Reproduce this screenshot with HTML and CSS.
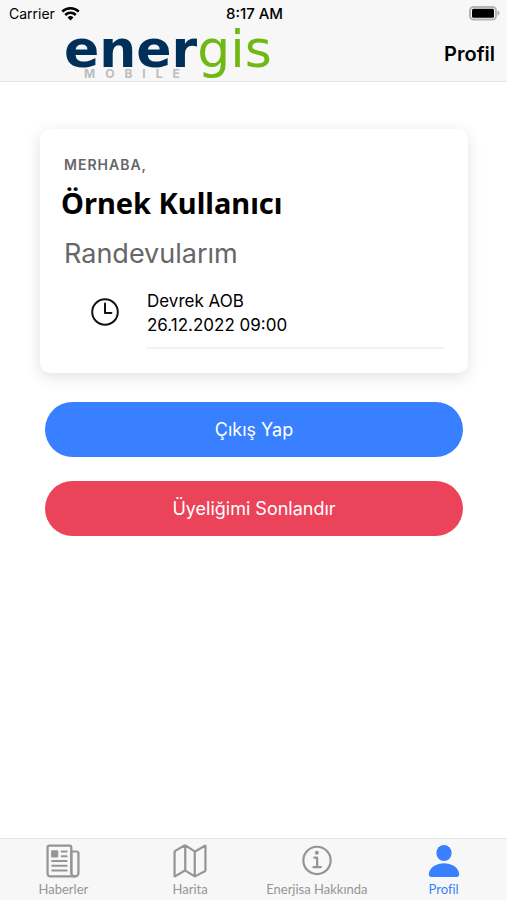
FILE: index.html
```html
<!DOCTYPE html>
<html lang="tr">
  <head>
    <meta charset="UTF-8" />
    <meta name="viewport" content="width=device-width, initial-scale=1.0" />
    <title>Energis Mobile - Profil</title>
    <link rel="stylesheet" href="styles.css">
  </head>
  <body>
    <header class="header">
      <div class="status">
        <div class="carrier">
          <span>Carrier</span>
          <svg class="wifi" viewBox="0 0 18 14" aria-hidden="true">
            <path d="M1.2 5.2a11.2 11.2 0 0 1 15.6 0M4 8.4a7.2 7.2 0 0 1 10 0" fill="none" stroke="#000" stroke-width="2.4" />
            <path d="M9 13.6 6.2 10.8a4 4 0 0 1 5.6 0z" />
          </svg>
        </div>
        <time class="clock">8:17 AM</time>
        <svg class="battery" viewBox="0 0 31 15" aria-hidden="true">
          <rect x="1" y="1" width="26" height="12.6" rx="3.6" fill="#f7f7f7" stroke="#b4b4b4" stroke-width="2" />
          <rect x="3" y="2.8" width="22" height="9" rx="1.5" />
          <path d="M28.6 4.6c2.4.8 2.4 4.4 0 5.2z" fill="#a8a8a8" />
        </svg>
      </div>
      <div class="toolbar">
        <div class="logo">
          <div class="logo-name"><b>ener</b><span>gis</span></div>
          <div class="logo-sub">MOBILE</div>
        </div>
        <h1>Profil</h1>
      </div>
    </header>

    <main>
      <section class="card">
        <p class="greeting">Merhaba,</p>
        <h2>Örnek Kullanıcı</h2>
        <h3>Randevularım</h3>
        <div class="appointment">
          <svg class="clock-icon" viewBox="0 0 28 28" aria-hidden="true">
            <circle cx="14" cy="14" r="12.8" />
            <path d="M14 5.6V15h6.4" />
          </svg>
          <div class="details">
            <p>Devrek AOB</p>
            <p>26.12.2022 09:00</p>
          </div>
        </div>
      </section>
      <div class="actions">
        <button class="logout" type="button">Çıkış Yap</button>
        <button class="delete" type="button">Üyeliğimi Sonlandır</button>
      </div>
    </main>

    <nav class="tabs">
      <a href="#haberler">
        <svg viewBox="0 0 512 512" aria-hidden="true">
          <path d="M368 415.9V72a24 24 0 0 0-24-24H72a24 24 0 0 0-24 24v352a40.1 40.1 0 0 0 40 40h328" />
          <path d="M416 464a48 48 0 0 1-48-48V128h72a24 24 0 0 1 24 24v264a48 48 0 0 1-48 48z" />
          <path d="M240 128h64M240 192h64M112 256h192M112 320h192M112 384h192" />
          <path class="solid" d="M176 208h-64a16 16 0 0 1-16-16v-64a16 16 0 0 1 16-16h64a16 16 0 0 1 16 16v64a16 16 0 0 1-16 16z" />
        </svg>
        <span>Haberler</span>
      </a>
      <a href="#harita">
        <svg viewBox="0 0 512 512" aria-hidden="true">
          <path d="M313.3 459.5 198.7 388.5a15.9 15.9 0 0 0-16.9-.1L54.3 462.8c-2.8 1.6-6.3-.4-6.3-3.6V133.1a16.1 16.1 0 0 1 8-13.9l125.8-70.8a15.9 15.9 0 0 1 17.1.2l114.2 74.9a16 16 0 0 0 17.2.2l127.4-74.3c2.8-1.7 6.3.4 6.3 3.6v326.4a16 16 0 0 1-8.1 13.9l-125.6 66.4a16 16 0 0 1-17-.2zM192 48v336M320 128v336" />
        </svg>
        <span>Harita</span>
      </a>
      <a href="#hakkinda">
        <svg viewBox="0 0 512 512" aria-hidden="true">
          <circle cx="256" cy="248" r="184" />
          <path d="M220 212h38v122M208 338h100" />
          <circle class="solid" cx="254" cy="146" r="27" />
        </svg>
        <span>Enerjisa Hakkında</span>
      </a>
      <a href="#profil" class="active">
        <svg viewBox="0 0 512 512" aria-hidden="true">
          <ellipse class="solid" cx="256" cy="128" rx="122" ry="128" />
          <path class="solid" d="M454 512H58a42 42 0 0 1-36-17c-9-11-12-26-9-41 9-48 37-88 81-118 46-30 105-46 162-46s116 16 162 46c44 30 72 70 81 118 3 15 0 30-9 41a42 42 0 0 1-36 17z" />
        </svg>
        <span>Profil</span>
      </a>
    </nav>
  </body>
</html>
```
FILE: styles.css
```css
* {
  box-sizing: border-box;
}
body {
  margin: 0;
  min-height: 100vh;
  display: flex;
  flex-direction: column;
  background: white;
  color: black;
  font-family: Inter, 'Liberation Sans', sans-serif;
}
h1, h2, h3, p {
  margin: 0;
}
.header {
  background: #f7f7f7;
  border-bottom: 1px solid #e5e5e5;
}
.status {
  display: grid;
  grid-template-columns: 1fr auto 1fr;
  align-items: center;
  height: 26px;
  padding: 0 7px 0 9px;
  font-size: 14px;
}
.carrier {
  display: flex;
  align-items: center;
  gap: 6px;
}
.wifi {
  width: 19px;
  height: 15px;
}
.clock {
  font-size: 15px;
  font-weight: 500;
}
.battery {
  width: 31px;
  height: 15px;
  justify-self: end;
}
.toolbar {
  display: flex;
  align-items: center;
  justify-content: space-between;
  height: 55px;
  padding: 0 12px 0 64px;
}
.toolbar h1 {
  font-size: 20px;
  font-weight: 600;
}
.logo-name {
  display: flex;
  font-family: 'DejaVu Sans', sans-serif;
  font-size: 52px;
  line-height: 40px;
  color: #00305a;
}
.logo-name span {
  color: #70b912;
}
.logo-sub {
  padding-left: 20px;
  font-size: 12px;
  font-weight: 700;
  line-height: 10px;
  letter-spacing: 10px;
  color: #bdbdbd;
}
main {
  flex: 1;
  padding: 47px 39px 24px 40px;
}
.card {
  padding: 24px;
  border-radius: 10px;
  box-shadow: 0 4px 16px rgba(0, 0, 0, 0.12);
}
.greeting {
  font-size: 14px;
  font-weight: 600;
  line-height: 24px;
  letter-spacing: 1px;
  text-transform: uppercase;
  color: #666;
}
.card h2 {
  margin-left: -3px;
  font-family: 'Noto Sans', sans-serif;
  font-size: 29px;
  line-height: 52px;
}
.card h3 {
  font-size: 27px;
  font-weight: 400;
  line-height: 50px;
  color: #666;
}
.appointment {
  display: flex;
  align-items: flex-start;
  gap: 28px;
  padding-left: 27px;
}
.clock-icon {
  width: 28px;
  height: 28px;
  margin-top: 19px;
  fill: none;
  stroke: #111;
  stroke-width: 2;
  stroke-linecap: round;
  stroke-linejoin: round;
}
.details {
  flex: 1;
  padding: 10px 0;
  border-bottom: 2px solid #f2f2f2;
  font-size: 17px;
  line-height: 24px;
}
.actions {
  display: flex;
  flex-direction: column;
  gap: 24px;
  padding: 29px 5px 0;
}
.actions button {
  height: 55px;
  border: none;
  border-radius: 28px;
  color: white;
  font-family: inherit;
  font-size: 18px;
  cursor: pointer;
}
.logout {
  background: #3880ff;
}
.delete {
  background: #eb445a;
}
.tabs {
  display: grid;
  grid-template-columns: repeat(4, 1fr);
  height: 62px;
  background: #f7f7f7;
  border-top: 1px solid #e5e5e5;
}
.tabs a {
  display: flex;
  flex-direction: column;
  align-items: center;
  padding-top: 2px;
  color: #959595;
  font-family: Lato, sans-serif;
  font-size: 13px;
  line-height: 16px;
  text-decoration: none;
  white-space: nowrap;
}
.tabs svg {
  width: 38px;
  height: 38px;
  margin: 1px 0;
  fill: none;
  stroke: currentColor;
  stroke-width: 30;
  stroke-linecap: round;
  stroke-linejoin: round;
}
.tabs .solid {
  fill: currentColor;
  stroke: none;
}
.tabs .active {
  color: #3880ff;
}
.tabs .active svg {
  width: 32px;
  height: 32px;
  margin: 4px 0;
}
```
